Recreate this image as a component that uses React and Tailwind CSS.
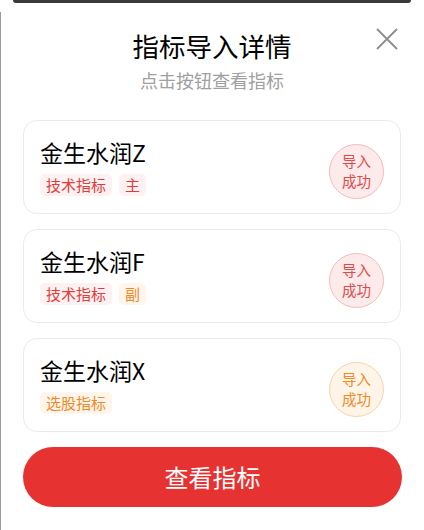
const items = [
  { name: "金生水润Z", tags: ["技术指标", "主"], tone: "red" },
  { name: "金生水润F", tags: ["技术指标", "副"], tone: "redOrange" },
  { name: "金生水润X", tags: ["选股指标"], tone: "orange" },
];

const Tag = ({ text, orange }) => (
  <span
    className={
      orange
        ? "h-[22px] px-[6px] rounded-[5px] bg-[#fff5ea] text-[#ec8a2a] text-[15px] leading-[22px]"
        : "h-[22px] px-[6px] rounded-[5px] bg-[#fdf1f1] text-[#e23b3b] text-[15px] leading-[22px]"
    }
  >
    {text}
  </span>
);

const Badge = ({ orange }) => (
  <div
    className={
      orange
        ? "mt-[8px] w-[55px] h-[55px] rounded-full border border-[#f6d3ac] bg-[#fff4e8] text-[#ef8a25] flex flex-col items-center justify-center text-[14.5px] leading-[20px]"
        : "mt-[8px] w-[55px] h-[55px] rounded-full border border-[#f2bcbc] bg-[#fdeaea] text-[#e04a4a] flex flex-col items-center justify-center text-[14.5px] leading-[20px]"
    }
  >
    <span>导入</span>
    <span>成功</span>
  </div>
);

export default function App() {
  return (
    <div
      className="relative w-[424px] h-[530px] bg-white overflow-hidden"
      style={{ fontFamily: '"Noto Sans CJK SC", "Noto Sans", sans-serif' }}
    >
      <div className="absolute left-0 top-[12px] bottom-0 w-px bg-[#9a9a9a]" />
      <div className="h-[3px] mx-[13px] rounded-b-full bg-[#3a3a3a]" />

      <div className="flex flex-col items-center pt-[26px]">
        <h1 className="text-[26.5px] leading-[34px] text-black">指标导入详情</h1>
        <p className="mt-[5px] text-[18px] leading-[24px] text-[#a0a0a0]">点击按钮查看指标</p>
      </div>

      <button className="absolute left-[376px] top-[28px]">
        <svg width="22" height="22" viewBox="0 0 22 22" fill="none" stroke="#8c8c8c" strokeWidth="1.8">
          <path d="M1 1L21 21M21 1L1 21" />
        </svg>
      </button>

      <div className="mt-[28px] mx-[23px] flex flex-col gap-[15px]">
        {items.map((item) => (
          <div
            key={item.name}
            className="h-[94px] border border-[#ebebeb] rounded-[14px] px-[16px] flex items-center justify-between"
          >
            <div className="flex flex-col gap-[8px]">
              <div className="text-[23px] leading-[28px] text-black">{item.name}</div>
              <div className="flex gap-[7px]">
                {item.tags.map((t, i) => (
                  <Tag
                    key={t}
                    text={t}
                    orange={item.tone === "orange" || (item.tone === "redOrange" && i === 1)}
                  />
                ))}
              </div>
            </div>
            <Badge orange={item.tone === "orange"} />
          </div>
        ))}
      </div>

      <button className="mt-[15px] mx-[23px] w-[379px] h-[60px] rounded-full bg-[#e73232] text-white text-[24px]">
        查看指标
      </button>
    </div>
  );
}
